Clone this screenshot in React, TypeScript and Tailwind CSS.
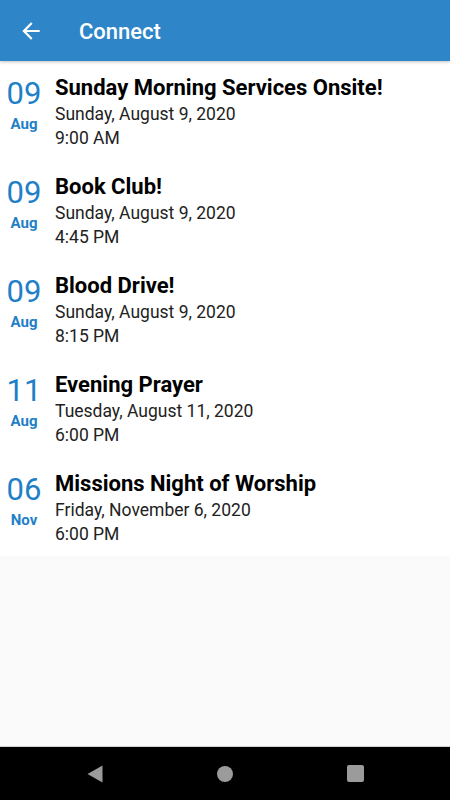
import React from "react";

const events = [
  { day: "09", mon: "Aug", title: "Sunday Morning Services Onsite!", date: "Sunday, August 9, 2020", time: "9:00 AM" },
  { day: "09", mon: "Aug", title: "Book Club!", date: "Sunday, August 9, 2020", time: "4:45 PM" },
  { day: "09", mon: "Aug", title: "Blood Drive!", date: "Sunday, August 9, 2020", time: "8:15 PM" },
  { day: "11", mon: "Aug", title: "Evening Prayer", date: "Tuesday, August 11, 2020", time: "6:00 PM" },
  { day: "06", mon: "Nov", title: "Missions Night of Worship", date: "Friday, November 6, 2020", time: "6:00 PM" },
];

export default function App() {
  return (
    <div className="flex h-[800px] w-[450px] flex-col bg-[#fafafa] font-['Roboto','Liberation_Sans',sans-serif]">
      <div className="relative z-10 flex h-[61px] shrink-0 items-center bg-[#2e86c9] shadow-[0_1px_3px_rgba(0,0,0,0.25)]">
        <div className="flex w-[62px] items-center justify-center pt-[1px]">
          <svg width="26" height="26" viewBox="0 0 24 24" fill="white">
            <path d="M20 11H7.83l5.59-5.59L12 4l-8 8 8 8 1.41-1.41L7.83 13H20v-2z" />
          </svg>
        </div>
        <div className="ml-[17px] pt-[2px] text-[22px] font-medium leading-[28px] text-white">Connect</div>
      </div>
      <div className="flex flex-col bg-white">
        {events.map((e, i) => (
          <div key={i} className="flex h-[99px]">
            <div className="flex w-[48px] shrink-0 flex-col items-center pt-[15px] text-[#1f7fc7]">
              <div className="text-[31px] font-normal leading-[36px]">{e.day}</div>
              <div className="mt-[2px] text-[15px] font-bold leading-[20px]">{e.mon}</div>
            </div>
            <div className="ml-[7px] flex flex-col pt-[13px]">
              <div className="text-[22px] font-bold leading-[28px] text-black">{e.title}</div>
              <div className="text-[17.5px] leading-[24px] text-[#222222]">{e.date}</div>
              <div className="text-[17.5px] leading-[24px] text-[#222222]">{e.time}</div>
            </div>
          </div>
        ))}
      </div>
      <div className="flex-1" />
      <div className="flex h-[54px] shrink-0 items-center justify-center border-t border-[#cfcfcf] bg-black">
        <div className="flex w-[130px] justify-center">
          <svg width="16" height="18" viewBox="0 0 16 18">
            <path d="M15.5 0.5 L0.5 9 L15.5 17.5 Z" fill="#9b9b9b" />
          </svg>
        </div>
        <div className="flex w-[130px] justify-center">
          <div className="h-[16px] w-[16px] rounded-full bg-[#9b9b9b]" />
        </div>
        <div className="flex w-[130px] justify-center">
          <div className="h-[17px] w-[17px] rounded-[2px] bg-[#9b9b9b]" />
        </div>
      </div>
    </div>
  );
}
